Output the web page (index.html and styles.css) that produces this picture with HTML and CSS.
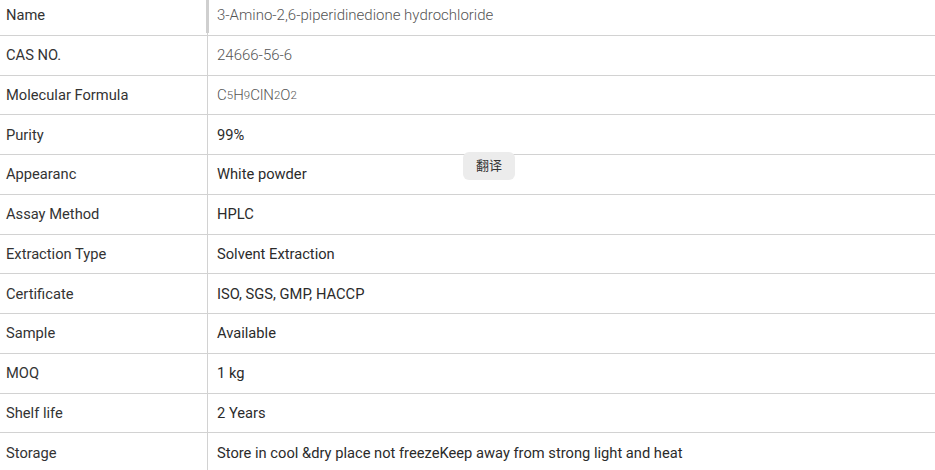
FILE: index.html
```html
<!DOCTYPE html>
<html>
<head>
<meta charset="utf-8">
<link rel="stylesheet" href="styles.css">
</head>
<body>
<div class="spec">
  <div class="row"><div class="label">Name</div><div class="value light first">3-Amino-2,6-piperidinedione hydrochloride</div></div>
  <div class="row"><div class="label">CAS NO.</div><div class="value light">24666-56-6</div></div>
  <div class="row"><div class="label">Molecular Formula</div><div class="value light">C<sub>5</sub>H<sub>9</sub>ClN<sub>2</sub>O<sub>2</sub></div></div>
  <div class="row"><div class="label">Purity</div><div class="value">99%</div></div>
  <div class="row"><div class="label">Appearanc</div><div class="value">White powder</div></div>
  <div class="row"><div class="label">Assay Method</div><div class="value">HPLC</div></div>
  <div class="row"><div class="label">Extraction Type</div><div class="value">Solvent Extraction</div></div>
  <div class="row"><div class="label">Certificate</div><div class="value">ISO, SGS, GMP, HACCP</div></div>
  <div class="row"><div class="label">Sample</div><div class="value">Available</div></div>
  <div class="row"><div class="label">MOQ</div><div class="value">1 kg</div></div>
  <div class="row"><div class="label">Shelf life</div><div class="value">2 Years</div></div>
  <div class="row"><div class="label">Storage</div><div class="value">Store in cool &amp;dry place not freezeKeep away from strong light and heat</div></div>
  <div class="translate">翻译</div>
</div>
</body>
</html>
```

FILE: styles.css
```css
html, body {
  margin: 0;
  padding: 0;
  background: #fff;
}
body {
  font-family: Roboto, "Noto Sans CJK SC", sans-serif;
  font-size: 14.7px;
  color: #333;
  overflow: hidden;
}
.spec {
  position: relative;
  margin-top: -4px;
  width: 935px;
}
.row {
  display: grid;
  grid-template-columns: 208px 1fr;
  height: 39.75px;
  box-sizing: border-box;
  border-bottom: 1px solid #d2d2d2;
}
.label {
  display: flex;
  align-items: center;
  padding-left: 6px;
  border-right: 1px solid #d2d2d2;
  color: #333;
}
.value {
  display: flex;
  align-items: center;
  padding-left: 9px;
  color: #2b2b2b;
  position: relative;
}
.value.light {
  color: #555;
  font-weight: 300;
  font-size: 15px;
}
.value.first::before {
  content: "";
  position: absolute;
  left: -2px;
  top: 0;
  bottom: 2px;
  width: 3px;
  background: #cfcfcf;
}
sub {
  font-size: 11.5px;
  vertical-align: -3px;
  line-height: 0;
}
.translate {
  position: absolute;
  left: 463px;
  top: 156px;
  width: 52px;
  height: 28px;
  border-radius: 6px;
  background: #ececec;
  font-family: "Noto Sans CJK SC", sans-serif;
  font-size: 13px;
  color: #333;
  display: flex;
  justify-content: center;
  align-items: center;
  padding-bottom: 3px;
  box-sizing: border-box;
}
```
